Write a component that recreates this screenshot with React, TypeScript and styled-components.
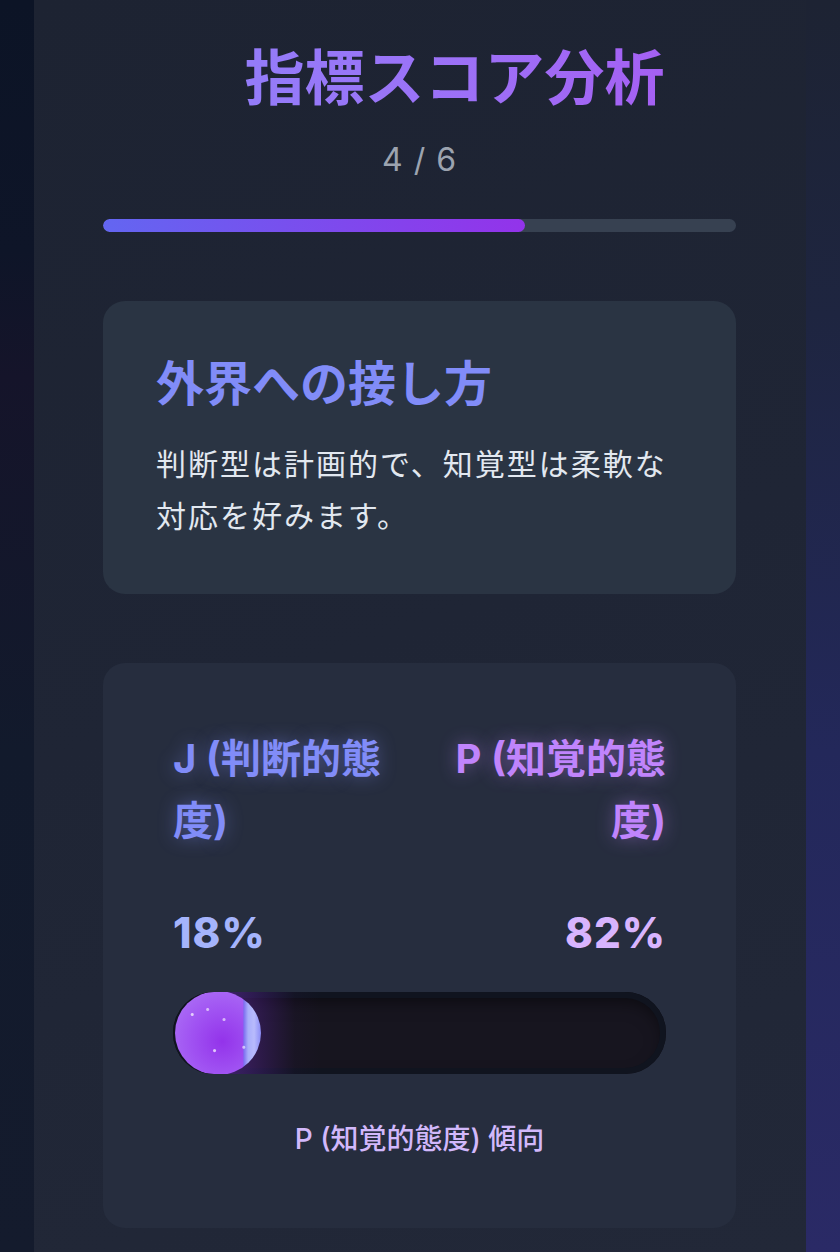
import React from 'react'
import styled, { createGlobalStyle } from 'styled-components'

const FONT = `'Inter', 'Noto Sans CJK JP', 'Noto Sans', sans-serif`

const GlobalStyle = createGlobalStyle`
  html, body {
    margin: 0;
    padding: 0;
    background: #0e1527;
  }
  body {
    font-family: ${FONT};
    -webkit-font-smoothing: antialiased;
  }
`

const Page = styled.div`
  display: grid;
  grid-template-columns: 34px 1fr 34px;
  min-height: 1252px;
`
const SideStrip = styled.div<{ side: 'left' | 'right' }>`
  background: ${({ side }) =>
    side === 'left'
      ? 'linear-gradient(180deg, #0c1426 0%, #0e1528 20%, #15142a 30%, #121a2c 60%, #141b2d 100%)'
      : 'linear-gradient(180deg, #1d2333 0%, #1e2540 25%, #23285a 60%, #2a2a66 100%)'};
`
const Main = styled.main`
  display: flex;
  flex-direction: column;
  padding: 40px 70px 0 69px;
  background: linear-gradient(160deg, #1d2332 0%, #1f2535 50%, #222838 100%);
`
const Title = styled.h1`
  margin: 0;
  padding-left: 70px;
  text-align: center;
  font-size: 60px;
  line-height: 76px;
  font-weight: 700;
  background: linear-gradient(90deg, #8e84fb 0%, #9d6ff6 60%, #a85af2 100%);
  -webkit-background-clip: text;
  background-clip: text;
  color: transparent;
`
const Counter = styled.div`
  margin-top: 24px;
  text-align: center;
  font-size: 32px;
  line-height: 40px;
  color: #9ca3af;
  letter-spacing: 1px;
`
const ProgressTrack = styled.div`
  margin-top: 39px;
  height: 13px;
  border-radius: 7px;
  background: #374151;
  overflow: hidden;
`
const ProgressFill = styled.div`
  height: 100%;
  border-radius: 7px;
  background: linear-gradient(90deg, #6366f1 0%, #9333ea 100%);
`
const Card = styled.section<{ tone: string }>`
  border-radius: 22px;
  background: ${({ tone }) => tone};
`
const InfoCard = styled(Card)`
  margin-top: 69px;
  padding: 53px 53px 52px;
`
const CardHeading = styled.h2`
  margin: 0;
  font-size: 48px;
  line-height: 60px;
  font-weight: 700;
  color: #818cf8;
`
const CardText = styled.p`
  margin: 24px 0 0;
  font-size: 30px;
  line-height: 52px;
  letter-spacing: 2px;
  color: #e2e8f0;
`
const ScoreCard = styled(Card)`
  margin-top: 69px;
  padding: 65px 70px 68px;
`
const LabelRow = styled.div`
  display: grid;
  grid-template-columns: 1fr 1fr;
  column-gap: 30px;
`
const DimLabel = styled.div<{ color: string; glow: string; align: 'left' | 'right' }>`
  font-size: 40px;
  line-height: 62px;
  font-weight: 700;
  color: ${({ color }) => color};
  text-align: ${({ align }) => align};
  text-shadow: 0 0 18px ${({ glow }) => glow};
`
const PercentRow = styled.div`
  display: flex;
  justify-content: space-between;
  margin-top: 58px;
`
const Percent = styled.div<{ color: string }>`
  font-size: 42px;
  line-height: 46px;
  font-weight: 800;
  color: ${({ color }) => color};
  letter-spacing: 1px;
`
const SliderTrack = styled.div`
  display: flex;
  align-items: center;
  margin-top: 36px;
  height: 82px;
  border-radius: 41px;
  background: #17151f;
  box-shadow: inset 0 0 0 6px #10141f, inset 0 8px 18px rgba(0, 0, 0, 0.55);
  overflow: hidden;
`
const Thumb = styled.div`
  position: relative;
  z-index: 1;
  flex: none;
  width: 86px;
  height: 84px;
  margin-left: 2px;
  border-radius: 50%;
  background:
    radial-gradient(circle at 20% 28%, rgba(255, 255, 255, 0.7) 0 1px, transparent 2px),
    radial-gradient(circle at 38% 22%, rgba(255, 255, 255, 0.6) 0 1px, transparent 2px),
    radial-gradient(circle at 57% 34%, rgba(255, 255, 255, 0.6) 0 1px, transparent 2px),
    radial-gradient(circle at 46% 71%, rgba(255, 255, 255, 0.7) 0 1px, transparent 2px),
    radial-gradient(circle at 80% 67%, rgba(255, 255, 255, 0.6) 0 1px, transparent 2px),
    linear-gradient(90deg, transparent 0 79%, #7c6ff0 80%, #a9aefb 85%, #b8bbfc 92%, #8b8cf5 100%),
    radial-gradient(circle at 55% 60%, #9333ea 0%, #a052f2 45%, #b07af7 100%);
`
const ThumbTrail = styled.div`
  flex: none;
  width: 104px;
  height: 100%;
  margin-left: -44px;
  background: linear-gradient(
    90deg,
    rgba(120, 50, 200, 0.5) 0%,
    rgba(85, 35, 150, 0.32) 45%,
    rgba(40, 22, 70, 0.15) 75%,
    rgba(23, 21, 31, 0) 100%
  );
`
const Tendency = styled.div`
  margin-top: 44px;
  text-align: center;
  font-size: 28px;
  line-height: 42px;
  font-weight: 500;
  color: #d2b8fb;
`

export default function App() {
  const step = 4
  const total = 6
  const pPercent = 82

  return (
    <>
      <GlobalStyle />
      <Page>
        <SideStrip side="left" />
        <Main>
          <Title>指標スコア分析</Title>
          <Counter>{`${step} / ${total}`}</Counter>
          <ProgressTrack>
            <ProgressFill style={{ width: `${(step / total) * 100}%` }} />
          </ProgressTrack>

          <InfoCard tone="#2a3443">
            <CardHeading>外界への接し方</CardHeading>
            <CardText>判断型は計画的で、知覚型は柔軟な対応を好みます。</CardText>
          </InfoCard>

          <ScoreCard tone="#262d3e">
            <LabelRow>
              <DimLabel color="#818cf8" glow="rgba(129, 140, 248, 0.45)" align="left">
                J (判断的態度)
              </DimLabel>
              <DimLabel color="#c084fc" glow="rgba(192, 132, 252, 0.45)" align="right">
                P (知覚的態度)
              </DimLabel>
            </LabelRow>
            <PercentRow>
              <Percent color="#a5b4fc">{`${100 - pPercent}%`}</Percent>
              <Percent color="#d8b4fe">{`${pPercent}%`}</Percent>
            </PercentRow>
            <SliderTrack>
              <Thumb />
              <ThumbTrail />
            </SliderTrack>
            <Tendency>P (知覚的態度) 傾向</Tendency>
          </ScoreCard>
        </Main>
        <SideStrip side="right" />
      </Page>
    </>
  )
}
